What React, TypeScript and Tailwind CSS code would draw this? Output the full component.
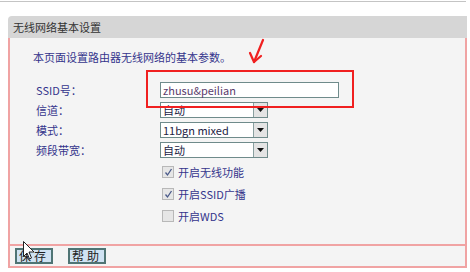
import React from 'react'

const font = 'font-["Noto_Sans_CJK_SC","Liberation_Sans",sans-serif]'
const labelCls = 'w-[124px] text-[11px] leading-[20px] text-[#34348c]'
const selectBox =
  'flex items-stretch w-[108px] h-[16px] border border-[#6f8b8b] bg-white'

function SelectBox({ value }: { value: string }) {
  return (
    <div className={selectBox}>
      <div className="flex-1 pl-[2px] text-[11px] leading-[14px] text-[#222244]">{value}</div>
      <div className="w-[14px] flex items-center justify-center border-l border-[#8aa0a0] bg-[#e4e4e4]">
        <svg width="7" height="4" viewBox="0 0 7 4">
          <path d="M0 0h7L3.5 4z" fill="#111" />
        </svg>
      </div>
    </div>
  )
}

function CheckRow({ label, checked }: { label: string; checked: boolean }) {
  return (
    <div className="flex items-center h-[22px] pl-[152px] gap-[4px]">
      <div className="w-[12px] h-[12px] border border-[#b8b8b8] bg-[#e6e6e6] flex items-center justify-center">
        {checked && (
          <svg width="9" height="9" viewBox="0 0 9 9">
            <path d="M1.5 4.5l2 2.5L7.5 1" stroke="#4a5a8a" strokeWidth="1.3" fill="none" />
          </svg>
        )}
      </div>
      <span className="text-[11px] leading-[16px] text-[#34348c]">{label}</span>
    </div>
  )
}

export default function App() {
  return (
    <div className={`relative w-[470px] h-[272px] bg-white overflow-hidden ${font}`}>
      <div className="mt-px w-[466px] h-px bg-[#c4c4c4]" />

      <div className="ml-[8px] mt-[14px] w-[459px]">
        {/* header */}
        <div className="h-[22px] bg-[#d6d6d6] rounded-tl-[4px] pl-[5px] text-[11px] leading-[22px] text-[#333]">
          无线网络基本设置
        </div>

        {/* body */}
        <div className="border-x-2 border-b-2 border-[#f0a3a3] bg-[#f4f4f4]">
          <div className="h-[206px] pt-[11px]">
            <p className="pl-[23px] text-[11px] leading-[16px] text-[#34348c]">
              本页面设置路由器无线网络的基本参数。
            </p>

            <div className="mt-[15px] pl-[26px]">
              <div className="flex items-center h-[20px]">
                <span className={labelCls}>SSID号：</span>
                <div className="w-[179px] h-[16px] border border-[#6f8b8b] bg-white pl-[2px] text-[11px] leading-[14px] text-[#5a3c6c]">
                  zhusu&amp;peilian
                </div>
              </div>
              <div className="flex items-center h-[20px]">
                <span className={labelCls}>信道：</span>
                <SelectBox value="自动" />
              </div>
              <div className="flex items-center h-[20px]">
                <span className={labelCls}>模式：</span>
                <SelectBox value="11bgn mixed" />
              </div>
              <div className="flex items-center h-[20px]">
                <span className={labelCls}>频段带宽：</span>
                <SelectBox value="自动" />
              </div>
            </div>

            <div className="mt-px">
              <CheckRow label="开启无线功能" checked />
              <CheckRow label="开启SSID广播" checked />
              <CheckRow label="开启WDS" checked={false} />
            </div>
          </div>

          <div className="border-t-2 border-[#f0a3a3] h-[22px] flex items-center gap-[15px] pl-[5px]">
            <button className="w-[38px] h-[16px] border-2 border-[#4f7474] bg-[#cfe2f2] text-[12px] leading-[12px] text-[#222] tracking-[3px]">
              保存
            </button>
            <button className="w-[38px] h-[16px] border-2 border-[#4f7474] bg-[#cfe2f2] text-[12px] leading-[12px] text-[#222] tracking-[3px]">
              帮助
            </button>
          </div>
        </div>
      </div>

      {/* annotation box + arrow */}
      <div className="absolute left-[146px] top-[70px] w-[208px] h-[38px] border-2 border-[#f02020]" />
      <svg className="absolute left-[248px] top-[38px]" width="20" height="28" viewBox="0 0 20 28">
        <path d="M15 2L6 24" stroke="#f02020" strokeWidth="2.2" fill="none" strokeLinecap="round" />
        <path d="M2 15L6 24L13 18" stroke="#f02020" strokeWidth="2.2" fill="none" strokeLinecap="round" strokeLinejoin="round" />
      </svg>

      {/* mouse cursor */}
      <svg className="absolute left-[23px] top-[241px]" width="12" height="19" viewBox="0 0 12 19">
        <path d="M0.5 0.5V15.5L4 12L6.5 18L8.5 17L6 11H11Z" fill="#fff" stroke="#222" strokeWidth="1" strokeLinejoin="round" />
      </svg>
    </div>
  )
}
